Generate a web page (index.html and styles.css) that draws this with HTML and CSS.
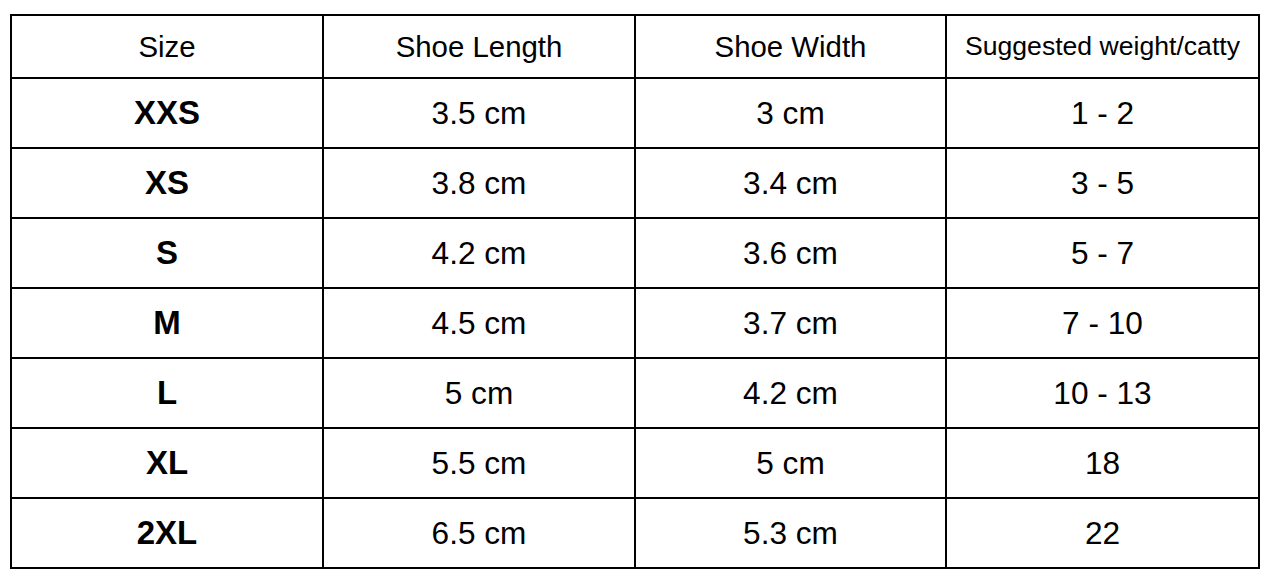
FILE: index.html
```html
<!DOCTYPE html>
<html lang="en">
<head>
<meta charset="utf-8">
<title>Size chart</title>
<link rel="stylesheet" href="styles.css">
</head>
<body>
<table class="chart">
  <colgroup>
    <col class="c1"><col class="c2"><col class="c3"><col class="c4">
  </colgroup>
  <thead>
    <tr class="head">
      <th>Size</th>
      <th>Shoe Length</th>
      <th>Shoe Width</th>
      <th class="small">Suggested weight/catty</th>
    </tr>
  </thead>
  <tbody>
    <tr><th class="size">XXS</th><td>3.5 cm</td><td>3 cm</td><td>1 - 2</td></tr>
    <tr><th class="size">XS</th><td>3.8 cm</td><td>3.4 cm</td><td>3 - 5</td></tr>
    <tr><th class="size">S</th><td>4.2 cm</td><td>3.6 cm</td><td>5 - 7</td></tr>
    <tr><th class="size">M</th><td>4.5 cm</td><td>3.7 cm</td><td>7 - 10</td></tr>
    <tr><th class="size">L</th><td>5 cm</td><td>4.2 cm</td><td>10 - 13</td></tr>
    <tr><th class="size">XL</th><td>5.5 cm</td><td>5 cm</td><td>18</td></tr>
    <tr><th class="size">2XL</th><td>6.5 cm</td><td>5.3 cm</td><td>22</td></tr>
  </tbody>
</table>
</body>
</html>
```
FILE: styles.css
```css
html, body {
  margin: 0;
  padding: 0;
  background: #fff;
}

body {
  font-family: "Liberation Sans", Arial, sans-serif;
  color: #000;
}

.chart {
  margin: 14px 0 0 10px;
  border-collapse: separate;
  border-spacing: 0;
  border-top: 2px solid #000;
  border-left: 2px solid #000;
  table-layout: fixed;
  width: 1250px;
  box-sizing: border-box;
}

.c1 { width: 312px; }
.c2 { width: 312px; }
.c3 { width: 311px; }
.c4 { width: 313px; }

.chart th,
.chart td {
  padding: 0;
  border-right: 2px solid #000;
  border-bottom: 2px solid #000;
  text-align: center;
  vertical-align: middle;
  box-sizing: border-box;
  height: 70px;
  font-size: 31.6px;
  font-weight: normal;
  white-space: nowrap;
}

.chart .head th {
  height: 63px;
  font-size: 29.4px;
}

.chart .head th.small {
  font-size: 26.6px;
}

.chart th.size {
  font-weight: bold;
  font-size: 33px;
}
```
